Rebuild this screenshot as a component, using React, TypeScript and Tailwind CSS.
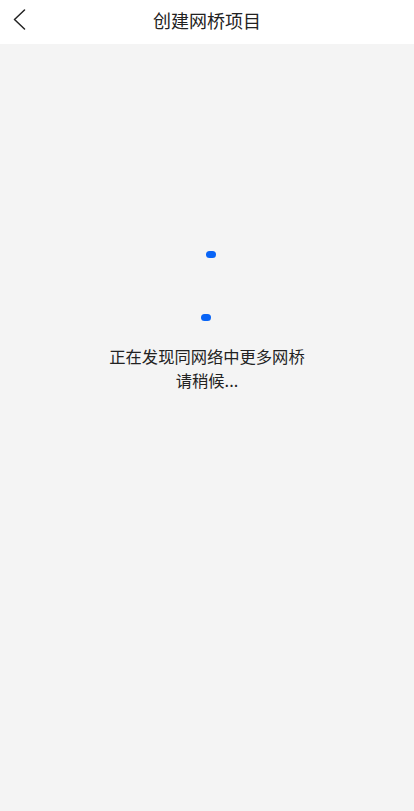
import React from 'react'

const App = () => {
  return (
    <div className="min-h-[811px] w-full bg-[#f4f4f4] flex flex-col" style={{ fontFamily: '"Noto Sans CJK SC", "Noto Sans", sans-serif' }}>
      <div className="h-11 bg-white flex items-center relative">
        <button className="absolute left-[13px] top-[9px] w-[13px] h-[21px] flex items-center justify-center">
          <svg width="13" height="21" viewBox="0 0 13 21" fill="none">
            <path d="M11.5 1 L1.5 10.5 L11.5 20" stroke="#222" strokeWidth="1.5" strokeLinecap="round" strokeLinejoin="round" />
          </svg>
        </button>
        <div className="flex-1 text-center text-[18px] text-[#222] leading-[44px] -mt-1">创建网桥项目</div>
      </div>

      <div className="flex flex-col items-center pt-[202px]">
        <div className="relative w-[70px] h-[80px]">
          <span className="absolute left-[34px] top-[5px] w-[10px] h-[7px] rounded-full bg-[#0864f6]" />
          <span className="absolute left-[29px] top-[68px] w-[10px] h-[7px] rounded-full bg-[#0864f6]" />
        </div>
        <div className="mt-[18px] text-[16.3px] leading-[24px] text-[#222] text-center">
          <div>正在发现同网络中更多网桥</div>
          <div>请稍候...</div>
        </div>
      </div>
    </div>
  )
}

export default App
